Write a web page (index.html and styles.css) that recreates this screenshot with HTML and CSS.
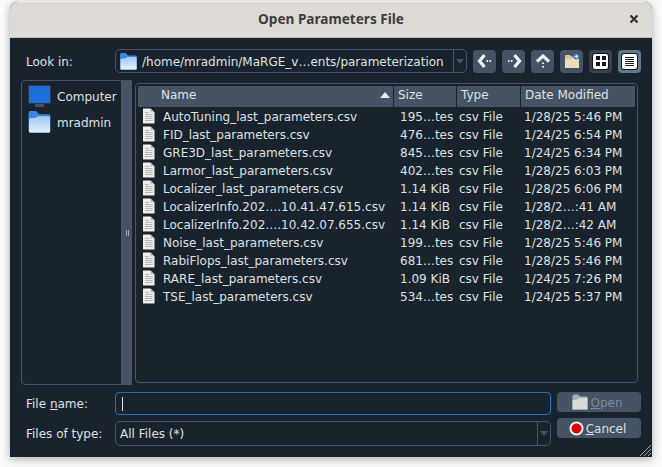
FILE: index.html
```html
<!DOCTYPE html>
<html lang="en">
<head>
<meta charset="UTF-8">
<meta name="viewport" content="width=device-width, initial-scale=1.0">
<title>Open Parameters File</title>
<link rel="stylesheet" href="styles.css">
</head>
<body>
<svg class="defs" width="0" height="0">
    <defs>
        <linearGradient id="folderFill" x1="0" y1="0" x2="0" y2="1">
            <stop offset="0" stop-color="#9fc9f0"/>
            <stop offset="1" stop-color="#e6f2fb"/>
        </linearGradient>
        <symbol id="folder" viewBox="1 1 21 21">
            <path d="M1 3q0-2 2-2h5l3 3h9q2 0 2 2v14q0 2-2 2H3q-2 0-2-2z" fill="#3b86dd"/>
            <path d="M1.500 9q0-1 1-1l5.500-.5L10 6h10q1.500 0 1.500 1.500V20q0 1.500-1.500 1.500H3q-1.500 0-1.500-1.500z" fill="url(#folderFill)"/>
        </symbol>
        <symbol id="doc" viewBox="0 0 13 16">
            <path d="M1 .5h7.500L12.500 4.500v11H1z" fill="#eeeeec"/>
            <path d="M8.500.5v4h4z" fill="#bfc2bd"/>
            <path d="M3 4.500h4M3 6.500h7.500M3 8.500h7.500M3 10.500h7.500M3 12.500h7.500" stroke="#b4b7b2" stroke-width="1"/>
        </symbol>
    </defs>
</svg>

<div class="window">
    <div class="titlebar">
        <span class="title">Open Parameters File</span>
        <svg class="close" width="10" height="10" viewBox="0 0 10 10"><path d="M1.500 1.500l7 7M8.500 1.500l-7 7" stroke="#2e3436" stroke-width="2.200"/></svg>
    </div>

    <div class="content">
        <div class="toprow">
            <span class="label label-top">Look in:</span>
            <div class="combo path-combo">
                <svg class="combo-icon" width="17" height="17"><use href="#folder"/></svg>
                <span class="combo-text path-text">/home/mradmin/MaRGE_v…ents/parameterization</span>
                <span class="combo-arrow"><i></i></span>
            </div>
            <div class="tools">
                <button class="tool" type="button">
                    <svg width="16" height="14" viewBox="0 0 16 14"><path d="M7.500 1L2.500 7l5 6" fill="none" stroke="#f2f2f2" stroke-width="3.200"/><path d="M9.500 7H11M12.500 7H14" stroke="#f2f2f2" stroke-width="1.800"/></svg>
                </button>
                <button class="tool" type="button">
                    <svg width="16" height="14" viewBox="0 0 16 14"><path d="M8.500 1l5 6-5 6" fill="none" stroke="#f2f2f2" stroke-width="3.200"/><path d="M2 7h1.500M5 7h1.500" stroke="#f2f2f2" stroke-width="1.800"/></svg>
                </button>
                <button class="tool" type="button">
                    <svg width="14" height="15" viewBox="0 0 14 15"><path d="M1 7.500L7 2l6 5.500" fill="none" stroke="#f2f2f2" stroke-width="3.200"/><path d="M7 8.500V10M7 12v1.500" stroke="#f2f2f2" stroke-width="2"/></svg>
                </button>
                <button class="tool" type="button">
                    <svg width="16" height="16" viewBox="0 0 16 16"><path d="M1 3q0-1 1-1h4l1.500 1.500H15V15H1z" fill="#d6c39b"/><path d="M1 6h14v9H1z" fill="#ecdcb9"/><circle cx="12.500" cy="3.500" r="3" fill="#3b86dd"/><path d="M12.500 2v3M11 3.500h3" stroke="#fff"/></svg>
                </button>
                <button class="tool view" type="button">
                    <span class="view-face">
                        <svg width="10" height="10" viewBox="0 0 10 10"><path d="M0 0h4v4H0zM6 0h4v4H6zM0 6h4v4H0zM6 6h4v4H6z" fill="#10161c"/></svg>
                    </span>
                </button>
                <button class="tool view active" type="button">
                    <span class="view-face">
                        <svg width="11" height="11" viewBox="0 0 11 11"><path d="M1 1.500h9M1 3.500h9M1 5.500h9M1 7.500h9M1 9.500h9" stroke="#19232d"/></svg>
                    </span>
                </button>
            </div>
        </div>

        <div class="panes">
            <div class="sidebar">
                <div class="place">
                    <svg width="23" height="22" viewBox="0 0 23 22"><path d="M7 18h9v4H7z" fill="#4a4f55"/><rect x="0.500" y="0.500" width="22" height="18" fill="#1c6fdc" stroke="#2a3a4a"/></svg>
                    <span>Computer</span>
                </div>
                <div class="place">
                    <svg width="23" height="22"><use href="#folder"/></svg>
                    <span>mradmin</span>
                </div>
            </div>
            <div class="splitter"><i></i></div>
            <div class="files">
                <div class="head">
                    <div class="head-cell name-head">Name<i class="sort"></i></div>
                    <div class="head-cell">Size</div>
                    <div class="head-cell">Type</div>
                    <div class="head-cell">Date Modified</div>
                </div>
                <div class="row"><span class="name"><svg width="13" height="16"><use href="#doc"/></svg><b>AutoTuning_last_parameters.csv</b></span><span>195…tes</span><span>csv File</span><span>1/28/25 5:46 PM</span></div>
                <div class="row"><span class="name"><svg width="13" height="16"><use href="#doc"/></svg><b>FID_last_parameters.csv</b></span><span>476…tes</span><span>csv File</span><span>1/24/25 6:54 PM</span></div>
                <div class="row"><span class="name"><svg width="13" height="16"><use href="#doc"/></svg><b>GRE3D_last_parameters.csv</b></span><span>845…tes</span><span>csv File</span><span>1/24/25 6:34 PM</span></div>
                <div class="row"><span class="name"><svg width="13" height="16"><use href="#doc"/></svg><b>Larmor_last_parameters.csv</b></span><span>402…tes</span><span>csv File</span><span>1/28/25 6:03 PM</span></div>
                <div class="row"><span class="name"><svg width="13" height="16"><use href="#doc"/></svg><b>Localizer_last_parameters.csv</b></span><span>1.14 KiB</span><span>csv File</span><span>1/28/25 6:06 PM</span></div>
                <div class="row"><span class="name"><svg width="13" height="16"><use href="#doc"/></svg><b>LocalizerInfo.202….10.41.47.615.csv</b></span><span>1.14 KiB</span><span>csv File</span><span>1/28/2…:41 AM</span></div>
                <div class="row"><span class="name"><svg width="13" height="16"><use href="#doc"/></svg><b>LocalizerInfo.202….10.42.07.655.csv</b></span><span>1.14 KiB</span><span>csv File</span><span>1/28/2…:42 AM</span></div>
                <div class="row"><span class="name"><svg width="13" height="16"><use href="#doc"/></svg><b>Noise_last_parameters.csv</b></span><span>199…tes</span><span>csv File</span><span>1/28/25 5:46 PM</span></div>
                <div class="row"><span class="name"><svg width="13" height="16"><use href="#doc"/></svg><b>RabiFlops_last_parameters.csv</b></span><span>681…tes</span><span>csv File</span><span>1/28/25 5:46 PM</span></div>
                <div class="row"><span class="name"><svg width="13" height="16"><use href="#doc"/></svg><b>RARE_last_parameters.csv</b></span><span>1.09 KiB</span><span>csv File</span><span>1/24/25 7:26 PM</span></div>
                <div class="row"><span class="name"><svg width="13" height="16"><use href="#doc"/></svg><b>TSE_last_parameters.csv</b></span><span>534…tes</span><span>csv File</span><span>1/24/25 5:37 PM</span></div>
            </div>
        </div>

        <div class="bottom">
            <div class="fields">
                <div class="field">
                    <label class="label" for="fileName">File <u>n</u>ame:</label>
                    <div class="name-input" id="fileName"><i class="caret"></i></div>
                </div>
                <div class="field">
                    <span class="label">Files of type:</span>
                    <div class="combo type-combo">
                        <span class="combo-text">All Files (*)</span>
                        <span class="combo-arrow"><i></i></span>
                    </div>
                </div>
            </div>
            <div class="actions">
                <button class="action disabled" type="button">
                    <svg width="16" height="16" viewBox="0 0 16 16"><path d="M.5 2q0-1.500 1.500-1.500h4L8 2.500h7.500V15.500H.5z" fill="#a9adb1"/><path d="M.5 6l5-.5L7 4h8.500v11.500H.5z" fill="#d9d9d7"/></svg>
                    <span class="action-text"><u>O</u>pen</span>
                </button>
                <button class="action" type="button">
                    <svg width="15" height="15" viewBox="0 0 15 15"><circle cx="7.500" cy="7.500" r="7" fill="#f1f1ef"/><circle cx="7.500" cy="7.500" r="5" fill="#d60000"/></svg>
                    <span class="action-text"><u>C</u>ancel</span>
                </button>
            </div>
        </div>
    </div>

    <svg class="grip" width="11" height="11" viewBox="0 0 11 11"><path d="M0 11L11 0M4 11l7-7M8 11l3-3" stroke="#9aa5b0" stroke-width="1"/></svg>
</div>
</body>
</html>
```

FILE: styles.css
```css
* {
    box-sizing: border-box;
}

html,
body {
    height: 100%;
}

body {
    font-family: "DejaVu Sans", sans-serif;
    font-size: 12px;
    background-color: #fbfbfb;
    margin: 0;
    padding: 1px 10px 10px;
    color: #dfe1e2;
    overflow: hidden;
}

.defs {
    display: block;
    height: 0;
}

.window {
    position: relative;
    width: 642px;
    height: 456px;
    background-color: #19232d;
    border-radius: 9px 9px 0 0;
    box-shadow: 0 2px 10px rgba(0, 0, 0, 0.32);
    overflow: hidden;
}

.titlebar {
    display: flex;
    align-items: center;
    justify-content: center;
    height: 37px;
    padding-bottom: 2px;
    background-color: #dedad6;
    border-top: 1px solid #f4f2f0;
    border-bottom: 1px solid #c0bcb8;
    position: relative;
}

.title {
    font-size: 13.6px;
    font-weight: bold;
    color: #3d3d3d;
    font-family: "Noto Sans", "DejaVu Sans", sans-serif;
}

.close {
    position: absolute;
    right: 13px;
    top: 12px;
}

.content {
    display: flex;
    flex-direction: column;
    padding: 11px 11px 0;
}

.toprow {
    display: flex;
    align-items: center;
    height: 24px;
}

.label {
    display: block;
    width: 94px;
    flex: none;
    padding-left: 5px;
    font-size: 12px;
    color: #dfe1e2;
}

.label-top {
    padding-top: 2px;
}

.combo {
    display: flex;
    align-items: center;
    border: 1px solid #455364;
    border-radius: 5px;
    flex: none;
}

.path-combo {
    width: 352px;
    height: 24px;
}

.type-combo {
    width: 436px;
    height: 25px;
}

.combo-icon {
    margin-left: 4px;
    flex: none;
}

.combo-text {
    flex: 1;
    padding-left: 4px;
    white-space: nowrap;
}

.path-text {
    padding-left: 5px;
    padding-top: 2px;
}

.combo-arrow {
    display: flex;
    align-items: center;
    justify-content: center;
    width: 13px;
    height: 100%;
    border-left: 1px solid #455364;
}

.combo-arrow i {
    border-left: 4px solid transparent;
    border-right: 4px solid transparent;
    border-top: 5px solid #455364;
}

.tools {
    display: flex;
    gap: 6px;
    margin-left: 6px;
}

.tool {
    display: flex;
    align-items: center;
    justify-content: center;
    width: 23px;
    height: 23px;
    padding: 0;
    border: none;
    border-radius: 4px;
    background-color: #455364;
}

.view {
    background-color: #37414f;
}

.view.active {
    background-color: #60798b;
}

.view-face {
    display: flex;
    align-items: center;
    justify-content: center;
    width: 15px;
    height: 15px;
    background-color: #fff;
    border-radius: 2px;
    box-shadow: 0 0 0 1px #10161c;
}

.panes {
    display: flex;
    margin-top: 7px;
    height: 305px;
}

.sidebar {
    width: 101px;
    height: 305px;
    border: 1px solid #455364;
    border-radius: 4px 0 0 4px;
    padding: 2px 0 0 6px;
    flex: none;
}

.place {
    display: flex;
    align-items: center;
    gap: 6px;
    height: 26px;
    color: #dfe1e2;
}

.place span {
    padding-top: 2px;
}

.place svg {
    flex: none;
}

.splitter {
    display: flex;
    align-items: center;
    justify-content: center;
    width: 10px;
    background-color: #455364;
    flex: none;
}

.splitter i {
    width: 3px;
    height: 6px;
    border-left: 1px solid #9da9b5;
    border-right: 1px solid #9da9b5;
}

.files {
    width: 503px;
    height: 300px;
    margin: 3px 0 0 3px;
    padding: 2px;
    border: 1px solid #455364;
    border-radius: 4px;
    flex: none;
}

.head,
.row {
    display: grid;
    grid-template-columns: 256px 63px 64px 114px;
}

.head {
    height: 21px;
    background-color: #455364;
}

.head-cell {
    padding: 0 0 3px 4px;
    font-size: 12px;
    color: #dfe1e2;
    border-right: 1px solid #19232d;
    display: flex;
    align-items: center;
}

.head-cell:last-child {
    border-right: none;
}

.name-head {
    padding-left: 23px;
    justify-content: space-between;
}

.sort {
    margin-right: 3px;
    border-left: 5px solid transparent;
    border-right: 5px solid transparent;
    border-bottom: 6px solid #e8eaec;
}

.row {
    height: 18px;
    align-items: center;
    font-size: 12px;
    white-space: nowrap;
}

.row > span {
    padding-left: 6px;
    padding-top: 2px;
    color: #dfe1e2;
}

.row > span:nth-child(3) {
    padding-left: 2px;
}

.row > span:nth-child(4) {
    padding-left: 3px;
}

.row .name {
    display: flex;
    align-items: center;
    gap: 8px;
    padding-left: 4px;
    padding-top: 0;
}

.row .name b {
    font-weight: normal;
    padding-top: 2px;
}

.row svg {
    flex: none;
}

.bottom {
    display: flex;
    justify-content: space-between;
    margin-top: 7px;
}

.fields {
    display: flex;
    flex-direction: column;
    gap: 6px;
}

.field {
    display: flex;
    align-items: center;
}

.name-input {
    width: 436px;
    height: 23px;
    display: flex;
    align-items: center;
    padding-left: 6px;
    border: 1px solid #1a72bb;
    border-radius: 4px;
}

.caret {
    width: 1px;
    height: 14px;
    background-color: #dfe1e2;
}

.actions {
    display: flex;
    flex-direction: column;
    gap: 6px;
}

.action {
    display: flex;
    align-items: center;
    justify-content: center;
    gap: 2px;
    width: 84px;
    height: 20px;
    padding: 0 3px 0 0;
    border: none;
    border-radius: 4px;
    background-color: #455364;
    color: #dfe1e2;
    font-family: inherit;
    font-size: 12px;
}

.action-text {
    padding-top: 2px;
}

.action.disabled {
    color: #788d9c;
}

.grip {
    position: absolute;
    right: 1px;
    bottom: 1px;
}
```
